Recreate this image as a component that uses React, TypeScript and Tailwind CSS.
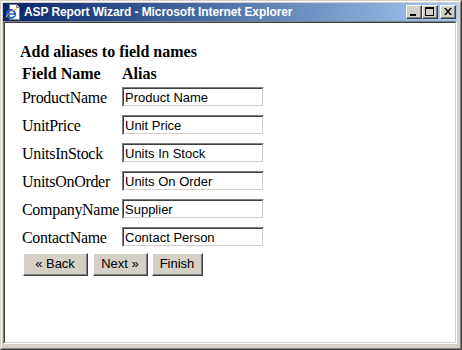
import React from 'react';

const fields = [
  { name: 'ProductName', alias: 'Product Name' },
  { name: 'UnitPrice', alias: 'Unit Price' },
  { name: 'UnitsInStock', alias: 'Units In Stock' },
  { name: 'UnitsOnOrder', alias: 'Units On Order' },
  { name: 'CompanyName', alias: 'Supplier' },
  { name: 'ContactName', alias: 'Contact Person' },
];

const serif = "font-['Liberation_Serif','Times_New_Roman',serif]";
const sans = "font-['Liberation_Sans',Arial,sans-serif]";

function IeIcon() {
  return (
    <svg width="16" height="16" viewBox="0 0 16 16">
      <path d="M4.5 0.5h7l3 3v12h-10z" fill="#fff" stroke="#7a7a7a" />
      <path d="M11.5 0.5v3h3" fill="#e8e8e8" stroke="#7a7a7a" />
      <circle cx="6" cy="10" r="4" fill="none" stroke="#1d5fd6" strokeWidth="2.2" />
      <path d="M2.5 10h7" stroke="#1d5fd6" strokeWidth="1.6" />
      <path d="M9.5 11.5h-4" stroke="#fff" strokeWidth="1.2" />
      <path d="M1 13.5c2-4 7-8 11-8.5" fill="none" stroke="#f2b418" strokeWidth="1" />
    </svg>
  );
}

function CaptionButton({ children, className = '' }: { children: React.ReactNode; className?: string }) {
  return (
    <div
      className={`w-[16px] h-[14px] bg-[#d4d0c8] border border-t-white border-l-white border-r-[#404040] border-b-[#404040] ${className}`}
    >
      <div className="w-full h-full border-r border-b border-r-[#808080] border-b-[#808080] relative">
        {children}
      </div>
    </div>
  );
}

function AliasInput({ value }: { value: string }) {
  return (
    <div className="w-[142px] h-[20px] border border-t-[#808080] border-l-[#808080] border-r-white border-b-white">
      <div
        className={`${sans} w-full h-full bg-white border border-t-[#404040] border-l-[#404040] border-r-[#d4d0c8] border-b-[#d4d0c8] pl-[1px] pt-[1px] flex items-center text-[13px] leading-[15px] text-black whitespace-nowrap overflow-hidden`}
      >
        {value}
      </div>
    </div>
  );
}

function WinButton({ label, width, className = '' }: { label: string; width: string; className?: string }) {
  return (
    <div
      className={`${width} h-[23px] bg-[#d4d0c8] border border-t-white border-l-white border-r-[#404040] border-b-[#404040] ${className}`}
    >
      <div
        className={`${sans} w-full h-full border-r border-b border-r-[#808080] border-b-[#808080] flex items-center justify-center text-[13px] text-black`}
      >
        {label}
      </div>
    </div>
  );
}

export default function App() {
  return (
    <div className="w-[462px] h-[350px] bg-[#d4d0c8] border border-t-[#d4d0c8] border-l-[#d4d0c8] border-r-[#404040] border-b-[#404040]">
      <div className="w-full h-full flex flex-col border border-t-white border-l-white border-r-[#808080] border-b-[#808080] pt-[1px] pl-[1px] pr-[3px] pb-[4px]">
        {/* title bar */}
        <div className="h-[18px] flex items-center bg-gradient-to-r from-[#0a246a] to-[#a6caf0] pl-[2px] pr-[1px]">
          <IeIcon />
          <span className={`${sans} ml-[3px] text-[12px] font-bold tracking-[-0.1px] text-white leading-none whitespace-nowrap`}>
            ASP Report Wizard - Microsoft Internet Explorer
          </span>
          <div className="ml-auto flex items-center">
            <CaptionButton>
              <div className="absolute left-[3px] top-[8px] w-[6px] h-[2px] bg-black" />
            </CaptionButton>
            <CaptionButton>
              <div className="absolute left-[2px] top-[1px] w-[9px] h-[9px] border border-black border-t-2" />
            </CaptionButton>
            <CaptionButton className="ml-[2px]">
              <svg className="absolute left-[3px] top-[2px]" width="8" height="7" viewBox="0 0 8 7">
                <path d="M0 0h2l2 2.5 2-2.5h2l-3 3.5 3 3.5h-2l-2-2.5-2 2.5h-2l3-3.5z" fill="#000" />
              </svg>
            </CaptionButton>
          </div>
        </div>

        {/* client edge */}
        <div className="flex-1 border border-t-[#808080] border-l-[#808080] border-r-white border-b-white">
          <div className="w-full h-full bg-white border border-t-[#404040] border-l-[#404040] border-r-[#d4d0c8] border-b-[#d4d0c8] pl-[15px] pt-[19px]">
            <div className={`${serif} text-[16px] leading-[19px] font-bold text-black`}>Add aliases to field names</div>

            <div className={`${serif} h-[22px] pt-[3px] flex text-[16px] leading-[19px] font-bold text-black`}>
              <div className="w-[102px] pl-[2px]">Field Name</div>
              <div>Alias</div>
            </div>

            {fields.map((f) => (
              <div key={f.name} className="h-[28px] flex items-center">
                <div className={`${serif} w-[102px] pl-[2px] text-[16px] leading-[19px] tracking-[-0.3px] text-black`}>
                  {f.name}
                </div>
                <AliasInput value={f.alias} />
              </div>
            ))}

            <div className="flex mt-[2px] ml-[3px]">
              <WinButton label="« Back" width="w-[65px]" />
              <WinButton label="Next »" width="w-[55px]" className="ml-[5px]" />
              <WinButton label="Finish" width="w-[51px]" className="ml-[4px]" />
            </div>
          </div>
        </div>
      </div>
    </div>
  );
}
